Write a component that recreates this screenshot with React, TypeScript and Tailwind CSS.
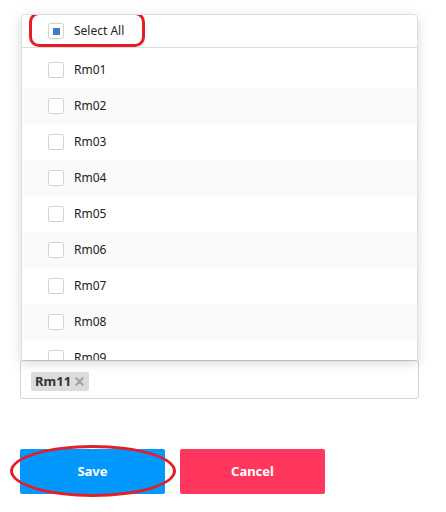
import React from 'react'

const rooms = ['Rm01', 'Rm02', 'Rm03', 'Rm04', 'Rm05', 'Rm06', 'Rm07', 'Rm08', 'Rm09']

function Box({ checked }: { checked?: boolean }) {
  return (
    <span className="w-4 h-4 border border-[#d4d4d4] rounded-[2px] bg-white flex items-center justify-center shrink-0">
      {checked && <span className="w-[7px] h-[7px] bg-[#3b7fc4]" />}
    </span>
  )
}

export default function App() {
  return (
    <div
      className="w-[446px] h-[512px] bg-white relative overflow-hidden text-[#333]"
      style={{ fontFamily: '"Noto Sans", "Open Sans", sans-serif' }}
    >
      <div className="pt-[14px] pl-5 w-[419px]">
        {/* Dropdown panel */}
        <div className="relative z-10 ml-px w-[397px] h-[346px] bg-white border border-[#dedede] border-b-0 rounded-t-[5px] shadow-[0_3px_12px_rgba(0,0,0,0.16)] flex flex-col overflow-hidden">
          <div className="relative h-[33px] shrink-0 flex items-center gap-[10px] pl-[26px] border-b border-[#dcdcdc]">
            <Box checked />
            <span className="text-[12px] text-[#222]">Select All</span>
            {/* annotation */}
            <div className="absolute left-[7px] top-[-3px] w-[116px] h-[35px] border-[3px] border-[#e41e26] rounded-[10px]" />
          </div>
          <div className="pt-[4px] flex flex-col">
            {rooms.map((r, i) => (
              <div
                key={r}
                className={`h-9 shrink-0 flex items-center gap-[10px] pl-[26px] ${i % 2 === 1 ? 'bg-[#fafafa]' : 'bg-white'}`}
              >
                <Box />
                <span className="text-[12px] text-[#222]">{r}</span>
              </div>
            ))}
          </div>
        </div>

        {/* Selected tags input */}
        <div className="h-[39px] w-[399px] border border-[#cfd3da] rounded-[3px] flex items-center pl-[10px] pt-[3px]">
          <span className="h-[19px] flex items-center gap-[4px] bg-[#dcdcdc] rounded-[2px] pl-[4px] pr-[5px]">
            <span className="text-[13px] font-bold text-[#333] leading-[19px]">Rm11</span>
            <svg width="9" height="9" viewBox="0 0 10 10">
              <path d="M1.5 1.5 L8.5 8.5 M8.5 1.5 L1.5 8.5" stroke="#a3a3a3" strokeWidth="2.4" strokeLinecap="round" />
            </svg>
          </span>
        </div>

        {/* Buttons */}
        <div className="mt-[50px] flex gap-[15px]">
          <div className="relative">
            <button className="w-[145px] h-[45px] bg-[#0398fe] rounded-[2px] text-white text-[13px] font-bold">
              Save
            </button>
            <div className="absolute left-[-10px] top-[-4px] w-[166px] h-[52px] border-[3px] border-[#e41e26] rounded-[50%]" />
          </div>
          <button className="w-[145px] h-[45px] bg-[#ff375e] rounded-[2px] text-white text-[13px] font-bold">
            Cancel
          </button>
        </div>
      </div>
    </div>
  )
}
